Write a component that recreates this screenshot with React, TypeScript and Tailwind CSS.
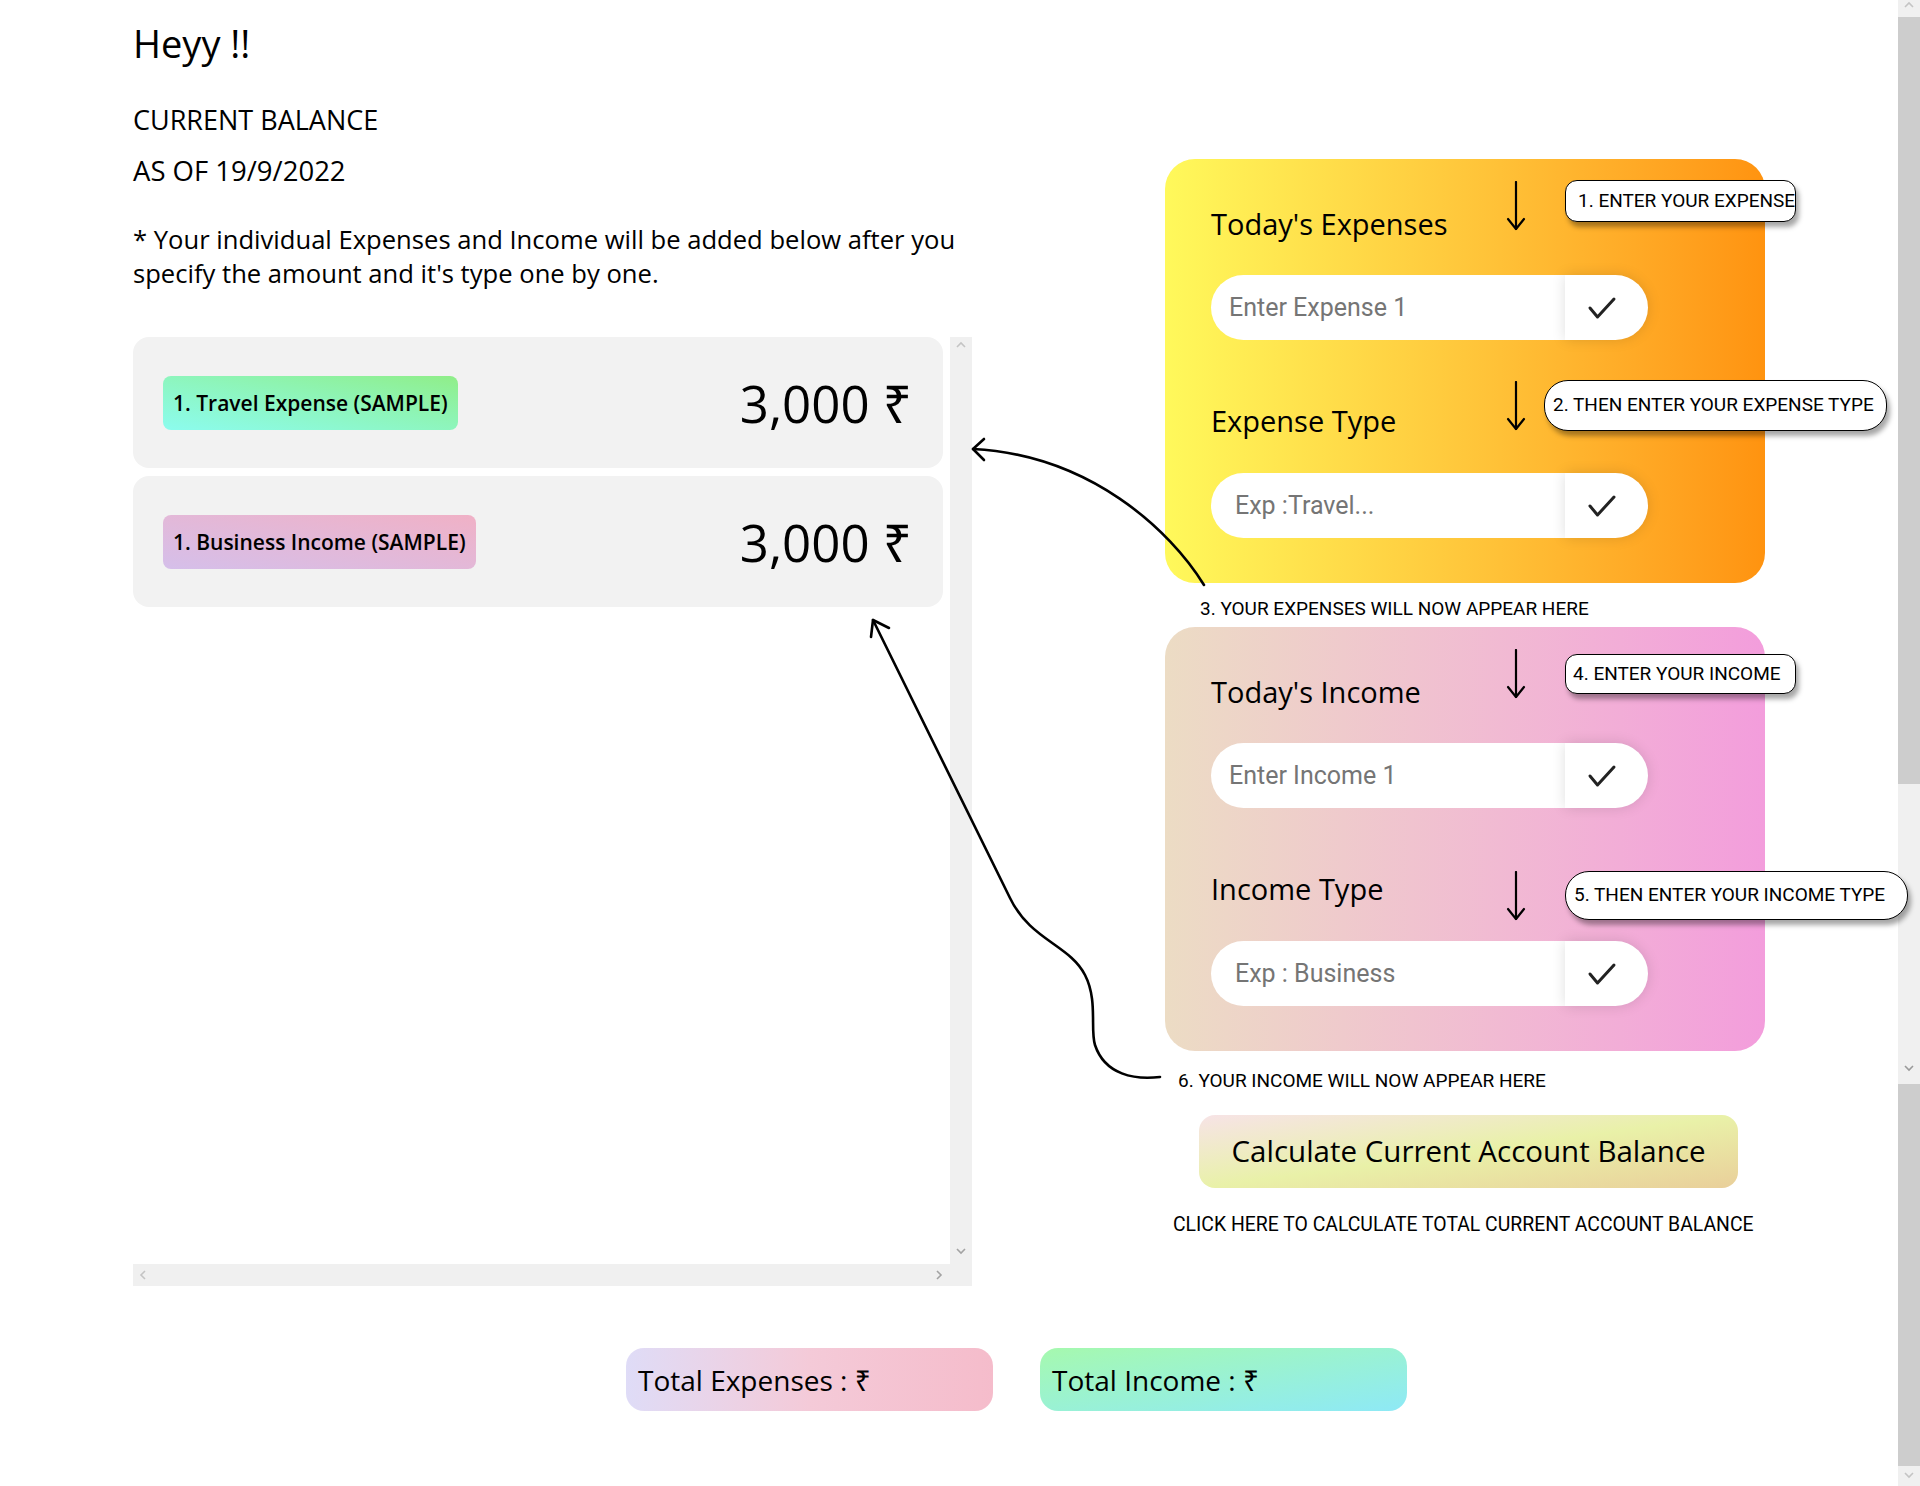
import React from 'react';

const sans = "font-['Open_Sans','Noto_Sans',sans-serif]";
const roboto = "font-['Roboto','Noto_Sans',sans-serif]";

const DownArrow = ({ className }: { className: string }) => (
  <svg className={className} width="24" height="50" viewBox="0 0 24 50" fill="none" stroke="#000" strokeWidth="2.2" strokeLinecap="round" strokeLinejoin="round">
    <path d="M12 1 V48" />
    <path d="M4 38 L12 48 L20 38" />
  </svg>
);

const Check = () => (
  <svg width="30" height="24" viewBox="0 0 30 24" fill="none" stroke="#222" strokeWidth="3" strokeLinecap="round" strokeLinejoin="round">
    <path d="M3 12 L10.5 21 L27 3" />
  </svg>
);

// tiny scrollbar caret, rotated per direction
const Caret = ({ dir, color = '#a3a3a3' }: { dir: 'up' | 'down' | 'left' | 'right'; color?: string }) => {
  const d = {
    up: 'M1 6 L5 2 L9 6',
    down: 'M1 2 L5 6 L9 2',
    left: 'M6 1 L2 5 L6 9',
    right: 'M2 1 L6 5 L2 9',
  }[dir];
  return (
    <svg width="10" height="10" viewBox="0 0 10 10" fill="none" stroke={color} strokeWidth="1.6">
      <path d={d} />
    </svg>
  );
};

const Tip = ({ text, className }: { text: string; className: string }) => (
  <div className={`absolute z-10 flex items-center whitespace-nowrap border border-black bg-white text-[19px] text-black shadow-[3px_5px_5px_rgba(0,0,0,0.35)] ${roboto} ${className}`}>
    {text}
  </div>
);

const InputRow = ({ placeholder, indent }: { placeholder: string; indent: string }) => (
  <div className="flex h-[65px] w-[437px]">
    <input
      placeholder={placeholder}
      className={`h-full w-[354px] rounded-l-full bg-white ${indent} text-[25px] text-black outline-none placeholder:text-[#757575] ${roboto}`}
    />
    <button className="flex h-full w-[83px] items-center justify-center rounded-r-full bg-white pr-[10px] shadow-[0_0_14px_rgba(0,0,0,0.13)]">
      <Check />
    </button>
  </div>
);

type Tips = { typeTop: string; first: string; second: string; firstClass: string; secondClass: string };

const EntryCard = ({
  gradient,
  title,
  typeTitle,
  placeholder,
  typePlaceholder,
  tips,
}: {
  gradient: string;
  title: string;
  typeTitle: string;
  placeholder: string;
  typePlaceholder: string;
  tips: Tips;
}) => (
  <div className={`relative flex h-[424px] w-[600px] flex-col rounded-[30px] pl-[46px] pt-[41px] ${gradient}`}>
    <div className="text-[29px] leading-[48px] text-black">{title}</div>
    <div className="mt-[27px]">
      <InputRow placeholder={placeholder} indent="pl-[18px]" />
    </div>
    <div className="mt-[57px] text-[29px] leading-[48px] text-black">{typeTitle}</div>
    <div className="mt-[28px]">
      <InputRow placeholder={typePlaceholder} indent="pl-[24px]" />
    </div>
    <DownArrow className="absolute left-[339px] top-[22px]" />
    <DownArrow className={`absolute left-[339px] ${tips.typeTop}`} />
    <Tip text={tips.first} className={tips.firstClass} />
    <Tip text={tips.second} className={tips.secondClass} />
  </div>
);

export default function App() {
  const samples = [
    { label: '1. Travel Expense (SAMPLE)', badge: 'bg-linear-to-tr from-[#8cfcee] to-[#90ee88]' },
    { label: '1. Business Income (SAMPLE)', badge: 'bg-linear-to-tr from-[#d5bfea] to-[#f0b1c6]' },
  ];

  return (
    <div className={`flex min-h-screen bg-white text-black ${sans}`}>
      <div className="relative h-[1486px] flex-1">
        <div className="flex">
          {/* left column */}
          <div className="ml-[133px] w-[839px] pt-[19px]">
            <h1 className="text-[38px] leading-[48px]">Heyy !!</h1>
            <p className="mt-[35px] text-[27px] leading-[36px]">CURRENT BALANCE</p>
            <p className="mt-[15px] text-[27.5px] leading-[36px]">AS OF 19/9/2022</p>
            <p className="mt-[34px] text-[25.6px] leading-[34px]">
              * Your individual Expenses and Income will be added below after you specify the amount and it's type one by one.
            </p>

            {/* list box with its scrollbars */}
            <div className="mt-[46px] grid h-[949px] w-[839px] grid-cols-[1fr_22px] grid-rows-[1fr_22px]">
              <div className="overflow-hidden">
                <div className="flex flex-col gap-[8px] pr-[7px]">
                  {samples.map((s, i) => (
                    <div key={i} className="flex h-[131px] items-center justify-between rounded-[16px] bg-[#f2f2f2] pl-[30px] pr-[31px]">
                      <span className={`rounded-[8px] px-[10px] py-[11px] text-[21px] font-semibold leading-[32px] ${s.badge}`}>{s.label}</span>
                      <span className="text-[51px] leading-[56px]">3,000 ₹</span>
                    </div>
                  ))}
                </div>
              </div>
              <div className="flex flex-col items-center justify-between bg-[#f0f0f0] pb-[7px] pt-[4px]">
                <Caret dir="up" color="#c4c4c4" />
                <Caret dir="down" />
              </div>
              <div className="flex items-center justify-between bg-[#f0f0f0] pl-[6px] pr-[5px]">
                <Caret dir="left" color="#c4c4c4" />
                <Caret dir="right" />
              </div>
              <div className="bg-[#f0f0f0]" />
            </div>
          </div>

          {/* right column */}
          <div className="ml-[193px] w-[600px] pt-[159px]">
            <EntryCard
              gradient="bg-linear-to-r from-[#fff95b] to-[#ff930f]"
              title="Today's Expenses"
              typeTitle="Expense Type"
              placeholder="Enter Expense 1"
              typePlaceholder="Exp :Travel..."
              tips={{
                typeTop: 'top-[222px]',
                first: '1. ENTER YOUR EXPENSE',
                second: '2. THEN ENTER YOUR EXPENSE TYPE',
                firstClass: 'left-[400px] top-[21px] h-[42px] w-[231px] rounded-[12px] pl-[12px]',
                secondClass: 'left-[379px] top-[221px] h-[51px] w-[343px] rounded-[24px] pl-[8px]',
              }}
            />
            <p className={`ml-[35px] mt-[16px] text-[19px] leading-[20px] ${roboto}`}>3. YOUR EXPENSES WILL NOW APPEAR HERE</p>
            <div className="mt-[8px]">
              <EntryCard
                gradient="bg-linear-to-r from-[#ecdcc4] to-[#f39ddc]"
                title="Today's Income"
                typeTitle="Income Type"
                placeholder="Enter Income 1"
                typePlaceholder="Exp : Business"
                tips={{
                  typeTop: 'top-[244px]',
                  first: '4. ENTER YOUR INCOME',
                  second: '5. THEN ENTER YOUR INCOME TYPE',
                  firstClass: 'left-[400px] top-[27px] h-[40px] w-[231px] rounded-[12px] pl-[7px]',
                  secondClass: 'left-[400px] top-[244px] h-[49px] w-[343px] rounded-[24px] pl-[8px]',
                }}
              />
            </div>
            <p className={`ml-[13px] mt-[20px] text-[19px] leading-[20px] ${roboto}`}>6. YOUR INCOME WILL NOW APPEAR HERE</p>
            <button className="ml-[34px] mt-[24px] flex h-[73px] w-[539px] items-center justify-center rounded-[16px] bg-linear-to-br from-[#f7e3e6] via-[#e9f1a8] to-[#e9cf9a] text-[29.5px] text-black">
              Calculate Current Account Balance
            </button>
            <p className={`ml-[8px] mt-[27px] whitespace-nowrap text-[19.4px] leading-[20px] ${roboto}`}>
              CLICK HERE TO CALCULATE TOTAL CURRENT ACCOUNT BALANCE
            </p>
          </div>
        </div>

        {/* totals */}
        <div className="ml-[626px] mt-[62px] flex gap-[47px]">
          <div className="flex h-[63px] w-[367px] items-center rounded-[18px] bg-linear-to-r from-[#dfdcf7] via-[#f4cad8] to-[#f5bccb] pl-[12px] text-[28px]">
            Total Expenses : ₹
          </div>
          <div className="flex h-[63px] w-[367px] items-center rounded-[18px] bg-linear-to-br from-[#a6f9ae] to-[#8ee9f6] pl-[12px] text-[28px]">
            Total Income : ₹
          </div>
        </div>

        {/* hand-drawn pointer arrows */}
        <svg className="pointer-events-none absolute left-0 top-0" width="1898" height="1300" fill="none" stroke="#000" strokeWidth="2.6" strokeLinecap="round" strokeLinejoin="round">
          <path d="M1204 585 C1170 530 1090 455 973 449" />
          <path d="M984 439 L973 449 L984 460" />
          <path d="M873 620 L1010 898 C1030 940 1070 945 1085 975 C1098 1000 1090 1030 1095 1045 C1105 1075 1135 1080 1160 1077" />
          <path d="M871 637 L873 620 L889 628" />
        </svg>
      </div>

      {/* page scrollbar */}
      <div className="flex h-[1486px] w-[22px] flex-col">
        <div className="flex h-[17px] items-start justify-center bg-[#f0f0f0] pt-[1px]">
          <Caret dir="up" color="#c4c4c4" />
        </div>
        <div className="h-[767px] bg-[#cdcdcd]" />
        <div className="flex h-[300px] items-end justify-center bg-[#f0f0f0] pb-[10px]">
          <Caret dir="down" color="#9a9a9a" />
        </div>
        <div className="h-[382px] bg-[#cdcdcd]" />
        <div className="flex h-[20px] items-center justify-center bg-[#f0f0f0]">
          <Caret dir="down" color="#c4c4c4" />
        </div>
      </div>
    </div>
  );
}
